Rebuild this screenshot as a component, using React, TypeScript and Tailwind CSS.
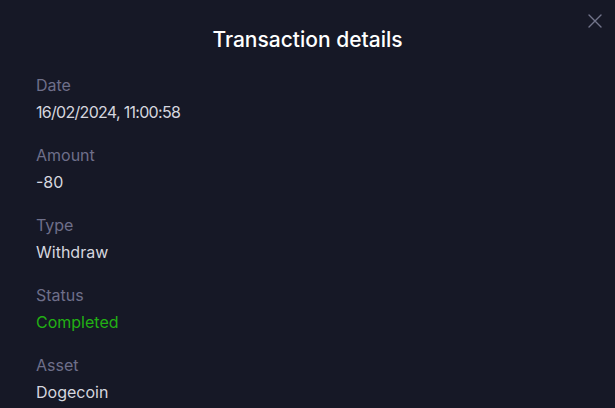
import React from "react";

const items: { label: string; value: string; green?: boolean; tight?: boolean }[] = [
  { label: "Date", value: "16/02/2024, 11:00:58", tight: true },
  { label: "Amount", value: "-80" },
  { label: "Type", value: "Withdraw" },
  { label: "Status", value: "Completed", green: true },
  { label: "Asset", value: "Dogecoin" },
];

export default function App() {
  return (
    <div
      className="relative w-[615px] h-[408px] overflow-hidden bg-[#161826]"
      style={{ fontFamily: "Inter, 'Open Sans', sans-serif" }}
    >
      <button className="absolute top-[14px] right-[13px] w-[14px] h-[14px]" aria-label="Close">
        <svg width="14" height="14" viewBox="0 0 14 14" fill="none">
          <path d="M1 1L13 13M13 1L1 13" stroke="#72748b" strokeWidth="1.4" strokeLinecap="round" />
        </svg>
      </button>
      <div className="flex flex-col px-9 pt-[26px]">
        <h1 className="text-center text-[21px] leading-[28px] font-medium text-white">
          Transaction details
        </h1>
        <div className="flex flex-col gap-[19px] mt-[19px]">
          {items.map((it) => (
            <div key={it.label} className="flex flex-col gap-[3px]">
              <div className="text-[16px] leading-[24px] text-[#6e6f8a]">{it.label}</div>
              <div
                className={`text-[16px] leading-[24px] ${it.green ? "text-[#22b014]" : "text-[#d5d6df]"} ${it.tight ? "tracking-[-0.7px]" : ""}`}
              >
                {it.value}
              </div>
            </div>
          ))}
        </div>
      </div>
    </div>
  );
}
